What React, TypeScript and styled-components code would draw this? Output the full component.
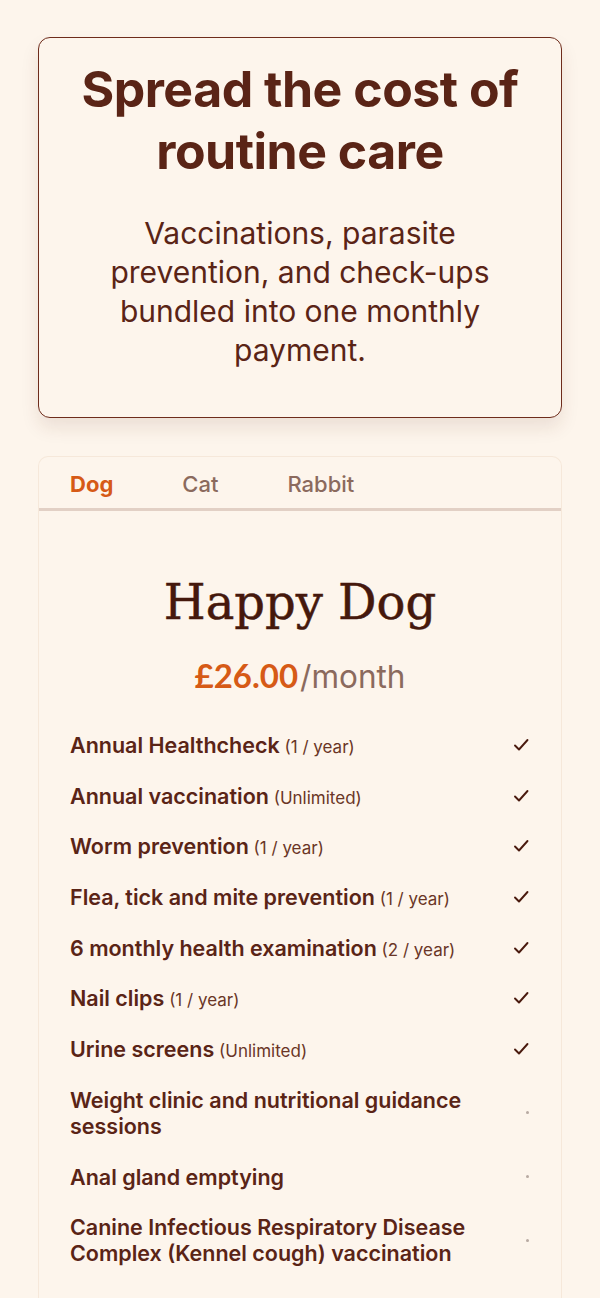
import styled, { createGlobalStyle } from 'styled-components';

const GlobalStyle = createGlobalStyle`
  html, body {
    margin: 0;
    padding: 0;
    background: #fdf5ec;
  }
  * {
    box-sizing: border-box;
  }
`;

const Page = styled.div`
  padding: 37px 38px 0;
  font-family: Inter, "Noto Sans", sans-serif;
  color: #5a2416;
`;

const Hero = styled.section`
  border: 1px solid #6e2c1b;
  border-radius: 12px;
  background: #fdf5ec;
  box-shadow: 0 10px 18px rgba(90, 40, 20, 0.1);
  padding: 20px 20px 47px;
  text-align: center;
`;

const HeroTitle = styled.h1`
  margin: 0;
  font-size: 50px;
  line-height: 62px;
  font-weight: 700;
  letter-spacing: -0.01em;
  color: #5a2416;
`;

const HeroText = styled.p`
  margin: 32px auto 0;
  max-width: 420px;
  font-size: 30px;
  line-height: 39px;
  font-weight: 400;
  color: #5a2416;
`;

const PlanCard = styled.section`
  margin-top: 38px;
  border: 1px solid #f6e8da;
  border-bottom: none;
  border-radius: 10px 10px 0 0;
  background: #fdf5ec;
  min-height: 860px;
`;

const TabList = styled.div`
  display: flex;
  gap: 69px;
  padding: 0 31px;
  border-bottom: 3px solid #e2d0c5;
`;

const Tab = styled.button<{ $active?: boolean }>`
  appearance: none;
  background: none;
  border: none;
  padding: 14px 0 11px;
  font-family: Inter, "Noto Sans", sans-serif;
  font-size: 22px;
  line-height: 26px;
  font-weight: ${({ $active }) => ($active ? 700 : 500)};
  color: ${({ $active }) => ($active ? '#d65a16' : '#8b6a5d')};
  cursor: pointer;
`;

const PlanBody = styled.div`
  padding: 61px 31px 40px;
`;

const PlanName = styled.h2`
  margin: 0;
  text-align: center;
  font-family: "DejaVu Serif", "Liberation Serif", serif;
  font-size: 48px;
  line-height: 60px;
  font-weight: 400;
  -webkit-text-stroke: 0.5px #45180c;
  color: #45180c;
`;

const PriceRow = styled.div`
  display: flex;
  justify-content: center;
  align-items: baseline;
  gap: 2px;
  margin-top: 25px;
  line-height: 36px;
`;

const Amount = styled.span`
  font-family: Lato, "Liberation Sans", sans-serif;
  font-size: 33px;
  font-weight: 700;
  color: #d65a16;
`;

const Period = styled.span`
  font-size: 31.5px;
  font-weight: 400;
  color: #8b6a5d;
`;

const FeatureList = styled.ul`
  list-style: none;
  margin: 37px 0 0;
  padding: 0;
  display: flex;
  flex-direction: column;
  gap: 24.7px;
`;

const Feature = styled.li`
  display: flex;
  align-items: center;
  justify-content: space-between;
  gap: 40px;
`;

const FeatureName = styled.span`
  font-size: 21.5px;
  line-height: 26px;
  font-weight: 600;
  color: #5a2416;
`;

const Qualifier = styled.span`
  font-size: 17px;
  line-height: 20px;
  font-weight: 400;
  color: #6a3526;
`;

const Mark = styled.span`
  flex: none;
  width: 18px;
  display: flex;
  justify-content: center;
`;

const Dot = styled.span`
  width: 3px;
  height: 3px;
  border-radius: 50%;
  background: #b8aaa2;
  margin-left: 13px;
`;

const features = [
  { name: 'Annual Healthcheck', note: '(1 / year)', included: true },
  { name: 'Annual vaccination', note: '(Unlimited)', included: true },
  { name: 'Worm prevention', note: '(1 / year)', included: true },
  { name: 'Flea, tick and mite prevention', note: '(1 / year)', included: true },
  { name: '6 monthly health examination', note: '(2 / year)', included: true },
  { name: 'Nail clips', note: '(1 / year)', included: true },
  { name: 'Urine screens', note: '(Unlimited)', included: true },
  { name: 'Weight clinic and nutritional guidance sessions', included: false },
  { name: 'Anal gland emptying', included: false },
  { name: 'Canine Infectious Respiratory Disease Complex (Kennel cough) vaccination', included: false },
];

function Check() {
  return (
    <svg width="18" height="16" viewBox="0 0 18 16" fill="none">
      <path d="M3 8.5 L7 12.5 L15.5 3" stroke="#4a1a0e" strokeWidth="1.9" strokeLinecap="round" strokeLinejoin="round" />
    </svg>
  );
}

export default function App() {
  return (
    <>
      <GlobalStyle />
      <Page>
        <Hero>
          <HeroTitle>Spread the cost of routine care</HeroTitle>
          <HeroText>
            Vaccinations, parasite prevention, and check-ups bundled into one monthly payment.
          </HeroText>
        </Hero>

        <PlanCard>
          <TabList>
            <Tab $active>Dog</Tab>
            <Tab>Cat</Tab>
            <Tab>Rabbit</Tab>
          </TabList>
          <PlanBody>
            <PlanName>Happy Dog</PlanName>
            <PriceRow>
              <Amount>£26.00</Amount>
              <Period>/month</Period>
            </PriceRow>
            <FeatureList>
              {features.map((item, index) => (
                <Feature key={index}>
                  <FeatureName>
                    {item.name}
                    {item.note && <Qualifier> {item.note}</Qualifier>}
                  </FeatureName>
                  <Mark>{item.included ? <Check /> : <Dot />}</Mark>
                </Feature>
              ))}
            </FeatureList>
          </PlanBody>
        </PlanCard>
      </Page>
    </>
  );
}
